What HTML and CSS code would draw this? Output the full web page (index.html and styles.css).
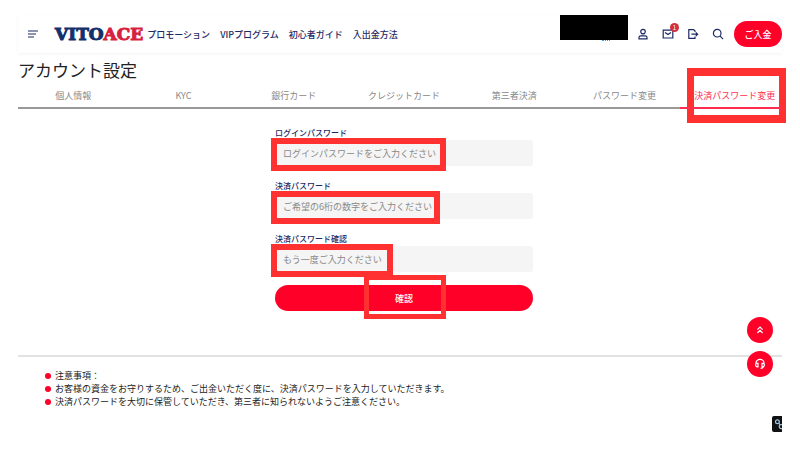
FILE: index.html
```html
<!DOCTYPE html>
<html lang="ja">
<head>
  <meta charset="UTF-8">
  <meta name="viewport" content="width=device-width, initial-scale=1.0">
  <title>アカウント設定</title>
  <link rel="stylesheet" href="styles.css">
</head>
<body>
  <header class="header">
    <button type="button" class="icon-btn menu-btn" aria-label="メニュー">
      <svg width="10" height="8" viewBox="0 0 10 8"><path d="M0 1h10M0 4h8M0 7h6"/></svg>
    </button>
    <a href="#" class="logo">VITO<span>ACE</span></a>
    <nav class="nav">
      <a href="#">プロモーション</a>
      <a href="#">VIPプログラム</a>
      <a href="#">初心者ガイド</a>
      <a href="#">入出金方法</a>
    </nav>
    <div class="balance"></div>
    <div class="header-icons">
      <button type="button" class="icon-btn" aria-label="アカウント">
        <svg width="12" height="12" viewBox="0 0 12 12"><circle cx="6" cy="3.6" r="2.3"/><path d="M2 10.8V9.6Q2 7.8 3.8 7.8h4.4Q10 7.8 10 9.6v1.2z"/></svg>
      </button>
      <button type="button" class="icon-btn" aria-label="メッセージ">
        <svg width="12" height="12" viewBox="0 0 12 12"><path d="M1.2 2.2h9.6v7.8H1.2zM3 4.4l3 2.2 3-2.2"/></svg>
        <span class="badge">1</span>
      </button>
      <button type="button" class="icon-btn" aria-label="ログアウト">
        <svg width="12" height="12" viewBox="0 0 12 12"><path d="M8 4V2.8L6.6 1.6H1.8v8.8H8V8.4M4.4 6.2h6M8.8 4.4l1.8 1.8-1.8 1.8"/></svg>
      </button>
      <button type="button" class="icon-btn" aria-label="検索">
        <svg width="12" height="12" viewBox="0 0 12 12"><circle cx="5.2" cy="5.2" r="3.8"/><path d="M7.9 7.9l3.2 3.2"/></svg>
      </button>
    </div>
    <button type="button" class="deposit-btn">ご入金</button>
  </header>

  <main class="content">
    <h1>アカウント設定</h1>
    <nav class="tabs">
      <a href="#">個人情報</a>
      <a href="#">KYC</a>
      <a href="#">銀行カード</a>
      <a href="#">クレジットカード</a>
      <a href="#">第三者決済</a>
      <a href="#">パスワード変更</a>
      <a href="#" class="active">決済パスワード変更<span class="mark mark-tab"></span></a>
    </nav>

    <form class="password-form">
      <div class="form-group">
        <label for="loginPassword">ログインパスワード</label>
        <div class="field">
          <input type="password" id="loginPassword" placeholder="ログインパスワードをご入力ください">
          <span class="mark mark-login"></span>
        </div>
      </div>
      <div class="form-group">
        <label for="payPassword">決済パスワード</label>
        <div class="field">
          <input type="password" id="payPassword" placeholder="ご希望の6桁の数字をご入力ください">
          <span class="mark mark-pay"></span>
        </div>
      </div>
      <div class="form-group">
        <label for="payPasswordConfirm">決済パスワード確認</label>
        <div class="field">
          <input type="password" id="payPasswordConfirm" placeholder="もう一度ご入力ください">
          <span class="mark mark-confirm"></span>
        </div>
      </div>
      <div class="field">
        <button type="submit" class="submit-btn">確認</button>
        <span class="mark mark-submit"></span>
      </div>
    </form>
  </main>

  <section class="notes">
    <ul>
      <li>注意事項：</li>
      <li>お客様の資金をお守りするため、ご出金いただく度に、決済パスワードを入力していただきます。</li>
      <li>決済パスワードを大切に保管していただき、第三者に知られないようご注意ください。</li>
    </ul>
  </section>

  <div class="floating">
    <button type="button" class="round-btn" aria-label="トップへ戻る">
      <svg width="12" height="12" viewBox="0 0 12 12"><path d="M3.4 5.6L6 3l2.6 2.6M3.4 9L6 6.4 8.6 9"/></svg>
    </button>
    <button type="button" class="round-btn" aria-label="サポート">
      <svg width="12" height="12" viewBox="0 0 12 12"><path d="M2 6V5a4 3.6 0 0 1 8 0v1M2 5.4h2v3.4H3Q1.6 8.4 1.6 7zM10 5.4H8v3.4h1Q10.4 8.4 10.4 7zM9.4 8.8Q9 10.4 6.6 10.4"/></svg>
    </button>
  </div>
  <button type="button" class="link-btn" aria-label="リンク">
    <svg width="10" height="16" viewBox="0 0 10 16"><circle cx="5.4" cy="5.8" r="1.9"/><path d="M6.8 7.2l1.4 1.8"/><circle cx="9.2" cy="10.6" r="2"/></svg>
  </button>
</body>
</html>
```

FILE: styles.css
```css
* {
  box-sizing: border-box;
}

body {
  margin: 0;
  padding-top: 15px;
  font-family: "Noto Sans CJK JP", sans-serif;
  font-size: 9px;
  color: #222;
  background-color: #fff;
}

a {
  color: inherit;
  text-decoration: none;
}

button {
  font-family: inherit;
  font-size: 9px;
  padding: 0;
  border: none;
  cursor: pointer;
}

svg {
  display: block;
  fill: none;
  stroke: currentColor;
  stroke-width: 1.2;
}

.header {
  display: flex;
  align-items: center;
  height: 38px;
  margin: 0 18px;
  padding-left: 10px;
  color: #1c2a64;
  box-shadow: 0 1px 3px rgba(0, 0, 0, 0.05);
}

.icon-btn {
  position: relative;
  color: #1c2a64;
  background: none;
}

.menu-btn {
  margin-right: 17px;
}

.logo {
  font-family: "DejaVu Serif", serif;
  font-size: 17px;
  font-weight: bold;
  line-height: 24px;
  color: #14306b;
  -webkit-text-stroke: 1px currentColor;
}

.logo span {
  color: #d81f3f;
}

.nav {
  display: flex;
  gap: 10px;
  margin-left: 4px;
  font-weight: 500;
  white-space: nowrap;
}

.balance {
  position: relative;
  align-self: flex-start;
  width: 68px;
  height: 25px;
  margin-left: auto;
  background-color: #000;
}

.balance::after {
  content: "";
  position: absolute;
  top: 100%;
  left: 42px;
  width: 8px;
  border-bottom: 1px dotted #3a9be0;
}

.header-icons {
  display: flex;
  gap: 13px;
  margin: 0 10px 0 9px;
}

.badge {
  position: absolute;
  top: -5px;
  right: -5px;
  width: 9px;
  height: 9px;
  border-radius: 50%;
  font-size: 6px;
  line-height: 9px;
  text-align: center;
  color: #fff;
  background-color: #d32f3c;
}

.deposit-btn {
  width: 48px;
  height: 26px;
  border-radius: 13px;
  font-weight: 500;
  color: #fff;
  background-color: #ff0029;
}

.content {
  padding: 5px 10px 0 18px;
}

.content h1 {
  margin: 0;
  font-size: 17px;
  font-weight: 400;
  line-height: 24px;
}

.tabs {
  display: grid;
  grid-template-columns: repeat(7, 1fr);
  text-align: center;
  line-height: 18px;
  color: #888;
}

.tabs a {
  position: relative;
  padding: 5px 0 2px;
  border-bottom: 2px solid #999;
}

.tabs .active {
  color: #ff2d50;
  border-bottom-color: transparent;
}

.tabs .active::after {
  content: "";
  position: absolute;
  top: 100%;
  left: 0;
  right: 8px;
  height: 2px;
  background-color: #ff2d50;
}

.password-form {
  width: 258px;
  margin: 17px auto 0;
}

.form-group {
  margin-bottom: 13px;
}

.form-group label {
  display: block;
  font-size: 8px;
  font-weight: 500;
  line-height: 14px;
  color: #1c2a64;
}

.field {
  position: relative;
}

.form-group input {
  display: block;
  width: 100%;
  height: 26px;
  padding: 0 8px;
  border: none;
  border-radius: 3px;
  font-family: inherit;
  font-size: 9px;
  background-color: #f5f5f5;
}

.form-group input::placeholder {
  color: #888;
}

.submit-btn {
  display: block;
  width: 100%;
  height: 26px;
  border-radius: 13px;
  font-weight: 500;
  color: #fff;
  background-color: #ff0029;
}

/* highlight frames */
.mark {
  position: absolute;
  border: 6px solid #ff3131;
  pointer-events: none;
}

.mark-tab {
  top: -14px;
  right: 4px;
  bottom: -16px;
  left: 7px;
  border-width: 8px 7px;
}

.mark-login,
.mark-pay,
.mark-confirm {
  top: -2px;
  left: -4px;
  width: 175px;
  height: 33px;
}

.mark-pay {
  width: 169px;
}

.mark-confirm {
  width: 122px;
}

.mark-submit {
  top: -10px;
  left: 89px;
  width: 82px;
  height: 44px;
  border-width: 5px;
}

.notes {
  margin: 44px 18px 0;
  padding: 12px 27px;
  border-top: 2px solid #e2e2e2;
}

.notes ul {
  margin: 0;
  padding: 0;
  list-style: none;
}

.notes li {
  display: flex;
  align-items: center;
  gap: 4px;
  line-height: 13px;
}

.notes li::before {
  content: "";
  width: 6px;
  height: 6px;
  border-radius: 50%;
  background-color: #ff0029;
}

.floating {
  position: fixed;
  right: 27px;
  bottom: 73px;
  display: flex;
  flex-direction: column;
  gap: 8px;
}

.round-btn {
  display: flex;
  align-items: center;
  justify-content: center;
  width: 26px;
  height: 26px;
  border-radius: 50%;
  color: #fff;
  background-color: #ff0029;
}

.link-btn {
  position: fixed;
  right: 18px;
  bottom: 18px;
  border-radius: 2px 0 0 2px;
  color: #9cc4e4;
  background-color: #111;
}
```
